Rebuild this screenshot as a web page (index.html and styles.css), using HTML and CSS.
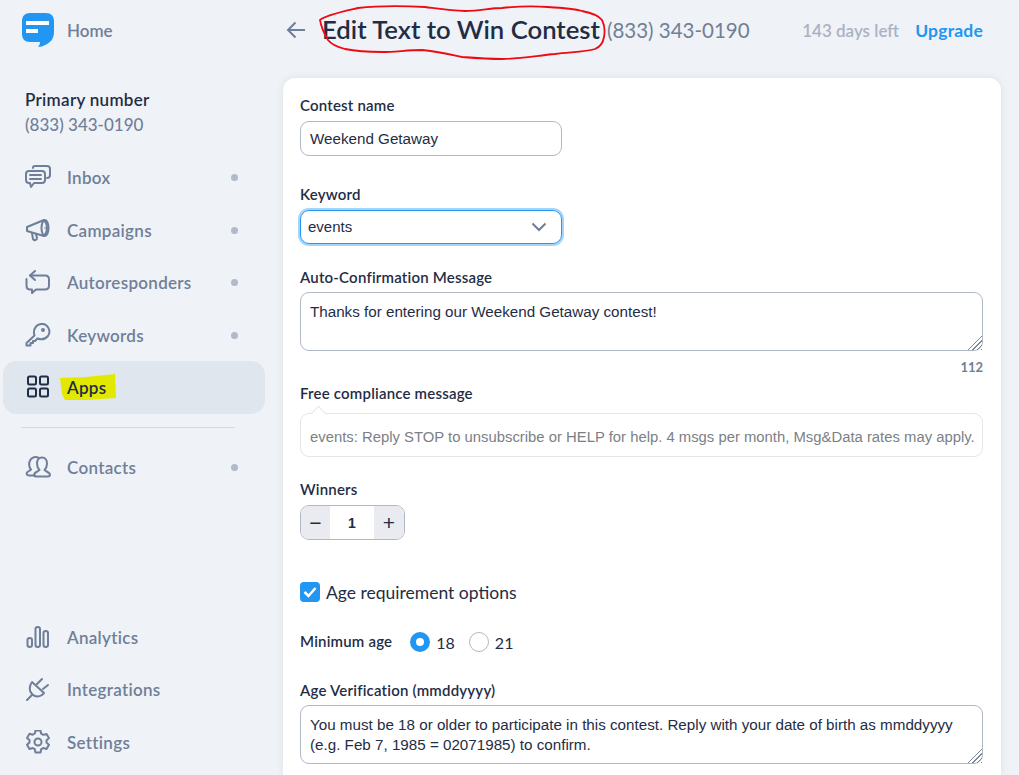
FILE: index.html
```html
<!DOCTYPE html>
<html lang="en">
<head>
  <meta charset="UTF-8">
  <meta name="viewport" content="width=device-width, initial-scale=1.0">
  <title>Edit Text to Win Contest</title>
  <link rel="stylesheet" href="styles.css">
</head>
<body>
  <aside class="sidebar">
    <a class="home-link">
      <svg class="logo" width="34" height="36" viewBox="0 0 34 36">
        <path d="M9 1h16c5 0 8 3 8 8v11c0 7-4 11-9 13-2 1-4 2-7 2 1-1 2-3 2-5H9c-5 0-8-3-8-8V9c0-5 3-8 8-8z" fill="#2196f3"/>
        <rect x="5" y="9" width="23" height="4" fill="#fff"/>
        <rect x="5" y="17" width="12" height="4" fill="#fff"/>
      </svg>
      <span>Home</span>
    </a>

    <div class="primary-number">
      <strong>Primary number</strong>
      <span>(833) 343-0190</span>
    </div>

    <nav class="nav-group">
      <a class="nav-item">
        <svg class="nav-icon" viewBox="0 0 26 24"><path d="M4 6h13c2 0 3 1 3 3v6c0 2-1 3-3 3H9l-3 4-1-4H4c-2 0-3-1-3-3V9c0-2 1-3 3-3z"/><path d="M8 3V2.500C8 1.500 9 1 10 1h12c2 0 3 1 3 3v6c0 2-1 3-3 3"/><path d="M5 10h11M5 14h11"/></svg>
        <span>Inbox</span><i class="dot"></i>
      </a>
      <a class="nav-item">
        <svg class="nav-icon" viewBox="0 0 26 24"><path d="M2 9l17-7c2 2 3 5 3 8s-1 6-3 8L2 13z"/><ellipse cx="20" cy="10" rx="3.500" ry="8"/><path d="M7 15l1 6c1 2 4 1 4-1l-1-4"/><circle cx="20" cy="10" r=".800" fill="#6f7f99" stroke="none"/></svg>
        <span>Campaigns</span><i class="dot"></i>
      </a>
      <a class="nav-item">
        <svg class="nav-icon" viewBox="0 0 26 24"><path d="M10 1L5 5.500l5 4.500"/><path d="M5 5.500h15c2.500 0 4 1.500 4 4v6c0 2.500-1.500 4-4 4H11l-4 3.500v-3.500H5c-2 0-3.500-1.500-3.500-4V9"/></svg>
        <span>Autoresponders</span><i class="dot"></i>
      </a>
      <a class="nav-item">
        <svg class="nav-icon" viewBox="0 0 26 24"><path d="M9.500 12.500L1.500 20v2.500h4V20H8v-2h2l2.500-2.500c4 1.500 8 .5 10.500-2.500 2.500-3.500 1.500-8-1.500-10.500S13.500.5 11 3.500c-2 2.500-2.500 6-1.500 9z"/><circle cx="18" cy="7" r="2" fill="#6f7f99" stroke="none"/></svg>
        <span>Keywords</span><i class="dot"></i>
      </a>
      <a class="nav-item active">
        <svg class="marker" width="58" height="27" viewBox="0 0 58 27"><path d="M1 4l26-1 29-3 1 24-29 2-22 0-3-6z" fill="#e3e800"/></svg>
        <svg class="nav-icon" viewBox="0 0 26 24"><rect x="3" y="1.500" width="8" height="8" rx="1.500"/><rect x="15" y="1.500" width="8" height="8" rx="1.500"/><rect x="3" y="13.500" width="8" height="8" rx="1.500"/><rect x="15" y="13.500" width="8" height="8" rx="1.500"/></svg>
        <span>Apps</span>
      </a>
      <hr class="nav-divider">
      <a class="nav-item">
        <svg class="nav-icon" viewBox="0 0 26 24"><path d="M10 20.500H4c-2 0-3-1.500-2-3 1-1.200 3-1.800 4-3-2-2-2.500-6-1-9 1.500-3.500 6-4.500 9-2.500"/><path d="M17 2.500c3.500 0 5 3 5 6 0 3-1 5-2.500 6.500 1 1.500 5 2 5.500 4.500 0 1.500-1 2-2 2H11c-1 0-2-.5-2-2 .5-2.500 4.500-3 5.500-4.500C13 13.500 12 11.500 12 8.500c0-3 1.500-6 5-6z"/></svg>
        <span>Contacts</span><i class="dot"></i>
      </a>
    </nav>

    <nav class="nav-group nav-bottom">
      <a class="nav-item">
        <svg class="nav-icon" viewBox="0 0 26 24"><rect x="2.500" y="13" width="4.500" height="9" rx="2.200"/><rect x="10.500" y="2" width="4.500" height="20" rx="2.200"/><rect x="18.500" y="6" width="4.500" height="16" rx="2.200"/></svg>
        <span>Analytics</span>
      </a>
      <a class="nav-item">
        <svg class="nav-icon" viewBox="0 0 26 24"><path d="M8 6l12 11-2 2c-3 2-7 2-10-1s-3-8 0-12z" transform="translate(-1 -1)"/><path d="M12 7l5-5M18 12l5-4M7 18l-5 5"/></svg>
        <span>Integrations</span>
      </a>
      <a class="nav-item">
        <svg class="nav-icon" viewBox="0 0 26 24"><path d="M10.500 1h5l.7 3.300 2.100 1.200 3.200-1 2.500 4.300-2.500 2.200v2.400l2.500 2.200-2.500 4.300-3.200-1-2.100 1.200-.7 3.300h-5l-.7-3.300-2.100-1.200-3.200 1-2.500-4.300L4.500 13.200v-2.400L2 8.600l2.500-4.300 3.200 1 2.100-1.200z" transform="translate(0 -.500) scale(1 .98)"/><circle cx="13" cy="12" r="3.500"/></svg>
        <span>Settings</span>
      </a>
    </nav>
  </aside>

  <main class="main">
    <header class="topbar">
      <svg class="back-arrow" width="20" height="18" viewBox="0 0 20 18"><path d="M19 9H2M9.500 1.500L2 9l7.500 7.500"/></svg>
      <h1>Edit Text to Win Contest</h1>
      <span class="top-phone">(833) 343-0190</span>
      <span class="days-left">143 days left</span>
      <a class="upgrade">Upgrade</a>
      <svg class="scribble" width="290" height="56" viewBox="318 4 290 56"><path d="M320 20C325 15 345 11 358 8C375 6 392 5 425 7C440 9 452 11 465 11C480 11 490 8 502 8C520 6 535 6 548 7C565 8 575 9 582 11C592 13 599 16 602 20C605 26 605 32 604 37C603 43 600 47 595 49C585 52 570 52 555 54C535 56 518 59 502 59C488 59 475 58 462 57C448 54 435 51 422 50C408 50 395 52 382 52C368 52 355 51 345 49C337 47 331 44 328 40C325 35 321 26 320 20Z"/></svg>
    </header>

    <form class="card">
      <label class="label">Contest name</label>
      <input class="input name-input" type="text" value="Weekend Getaway">

      <label class="label keyword-label">Keyword</label>
      <div class="select">
        <span>events</span>
        <svg width="16" height="10" viewBox="0 0 16 10"><path d="M1.500 1.500L8 8l6.500-6.500"/></svg>
      </div>

      <label class="label confirm-label">Auto-Confirmation Message</label>
      <textarea class="textarea confirm-text">Thanks for entering our Weekend Getaway contest!</textarea>
      <div class="counter">112</div>

      <label class="label compliance-label">Free compliance message</label>
      <div class="compliance">events: Reply STOP to unsubscribe or HELP for help. 4 msgs per month, Msg&amp;Data rates may apply.</div>

      <label class="label winners-label">Winners</label>
      <div class="stepper">
        <button type="button">&minus;</button>
        <span>1</span>
        <button type="button">+</button>
      </div>

      <div class="check-row">
        <span class="checkbox"><svg width="14" height="12" viewBox="0 0 14 12"><path d="M1.500 6l4 4 7-8"/></svg></span>
        <span>Age requirement options</span>
      </div>

      <div class="age-row">
        <span class="label">Minimum age</span>
        <span class="radio checked"></span><span class="radio-text">18</span>
        <span class="radio"></span><span class="radio-text">21</span>
      </div>

      <label class="label verify-label">Age Verification (mmddyyyy)</label>
      <textarea class="textarea verify-text">You must be 18 or older to participate in this contest. Reply with your date of birth as mmddyyyy (e.g. Feb 7, 1985 = 02071985) to confirm.</textarea>
    </form>
  </main>
</body>
</html>
```

FILE: styles.css
```css
* {
  box-sizing: border-box;
}
html, body {
  height: 100%;
}
body {
  margin: 0;
  height: 775px;
  overflow: hidden;
  display: flex;
  background-color: #eff2f6;
  color: #1f2d45;
  font-family: Lato, "Liberation Sans", sans-serif;
}

/* sidebar */
.sidebar {
  width: 283px;
  flex-shrink: 0;
  display: flex;
  flex-direction: column;
  padding: 12px 18px 0 3px;
}
.home-link {
  display: flex;
  align-items: center;
  gap: 12px;
  padding-left: 18px;
  height: 36px;
  font-size: 17px;
  font-weight: 600;
  color: #6f7f99;
}
.primary-number {
  display: flex;
  flex-direction: column;
  gap: 6px;
  margin-top: 42px;
  padding-left: 22px;
  font-size: 17px;
  line-height: 19px;
}
.primary-number strong {
  font-weight: 600;
  letter-spacing: 0.3px;
  color: #1f2d45;
}
.primary-number span {
  color: #6f7f99;
  font-weight: 500;
}
.nav-group {
  margin-top: 17px;
}
.nav-bottom {
  margin-top: auto;
  margin-bottom: 7px;
}
.nav-item {
  position: relative;
  display: flex;
  align-items: center;
  height: 52.500px;
  padding-left: 22px;
  font-size: 17px;
  font-weight: 600;
  letter-spacing: 0.3px;
  color: #6f7f99;
  border-radius: 14px;
}
.nav-item span {
  position: relative;
  margin-left: 16px;
  padding-top: 1px;
}
.nav-icon {
  width: 26px;
  height: 24px;
  fill: none;
  stroke: #6f7f99;
  stroke-width: 2;
  stroke-linejoin: round;
  stroke-linecap: round;
}
.dot {
  position: absolute;
  left: 228px;
  top: 23px;
  width: 7px;
  height: 7px;
  border-radius: 50%;
  background-color: #afbacb;
}
.nav-item.active {
  background-color: #e0e6ed;
  color: #1f2d45;
}
.nav-item.active .nav-icon {
  stroke: #1f2d45;
}
.marker {
  position: absolute;
  left: 56px;
  top: 13px;
}
.nav-divider {
  margin: 13px 30px 13px 18px;
  border: none;
  border-top: 1px solid #d5dae0;
}

/* main column */
.main {
  flex: 1;
  display: flex;
  flex-direction: column;
  padding-right: 18px;
}
.topbar {
  position: relative;
  display: flex;
  align-items: center;
  height: 78px;
  padding: 0 0 18px 3px;
}
.back-arrow {
  fill: none;
  stroke: #6f7f99;
  stroke-width: 2;
  margin-right: 16px;
}
.topbar h1 {
  margin: 0 0 2px;
  font-size: 25.700px;
  font-weight: 600;
  color: #1f2d45;
}
.top-phone {
  margin-left: 7px;
  font-size: 20.500px;
  color: #6f7f99;
}
.days-left {
  margin-left: auto;
  font-size: 17px;
  font-weight: 600;
  color: #a9b3c2;
}
.upgrade {
  margin: 0 18px 0 16px;
  font-size: 17.500px;
  font-weight: 700;
  letter-spacing: 0.2px;
  color: #2196f3;
}
.scribble {
  position: absolute;
  left: 35px;
  top: 4px;
  fill: none;
  stroke: #ee0a14;
  stroke-width: 1.800;
}

/* form card */
.card {
  flex: 1;
  display: flex;
  flex-direction: column;
  align-items: flex-start;
  padding: 20px 18px 0 17px;
  background-color: #fff;
  border-radius: 12px 12px 0 0;
  box-shadow: 0 0 8px rgba(31, 45, 69, 0.08);
}
.label {
  height: 16px;
  font-size: 15px;
  line-height: 15px;
  font-weight: 600;
  letter-spacing: 0.2px;
  color: #1f2d45;
}
.input, .textarea {
  font-family: "Liberation Sans", Arial, sans-serif;
  font-size: 15.200px;
  line-height: 20px;
  color: #1f2d45;
  background-color: #fff;
  border: 1px solid #b0b8c6;
  border-radius: 9px;
  outline: none;
}
.input {
  width: 262px;
  height: 35px;
  margin-top: 7px;
  padding: 0 9px;
}
.keyword-label {
  margin-top: 31px;
}
.select {
  display: flex;
  align-items: center;
  justify-content: space-between;
  width: 262px;
  height: 34px;
  margin-top: 7px;
  padding: 0 14px 1px 7px;
  font-family: "Liberation Sans", Arial, sans-serif;
  font-size: 15px;
  border: 1.500px solid #2196f3;
  border-radius: 9px;
  box-shadow: 0 0 0 2px #a6d5fa;
}
.select svg {
  fill: none;
  stroke: #6f7f99;
  stroke-width: 2;
}
.confirm-label {
  margin-top: 26px;
}
.textarea {
  width: 683px;
  padding: 9px 9px 0;
  resize: vertical;
}
.textarea::-webkit-resizer {
  background:
    linear-gradient(135deg, #fff 50%, transparent 50%),
    repeating-linear-gradient(135deg, transparent 0 2px, #7c8798 2px 3px);
}
.confirm-text {
  height: 59px;
  margin-top: 6px;
}
.counter {
  align-self: flex-end;
  margin-top: 8px;
  font-size: 13px;
  line-height: 16px;
  font-weight: 700;
  color: #6f7f99;
}
.compliance-label {
  margin-top: 11px;
}
.compliance {
  position: relative;
  width: 683px;
  height: 44px;
  margin-top: 11px;
  padding: 15px 0 0 9px;
  font-family: "Liberation Sans", Arial, sans-serif;
  font-size: 14.850px;
  line-height: 16px;
  white-space: nowrap;
  color: #7c7f85;
  border: 1px solid #e3e7ec;
  border-radius: 9px;
}
.compliance::before {
  content: "";
  position: absolute;
  left: 12px;
  top: -6px;
  width: 10px;
  height: 10px;
  background-color: #fff;
  border-left: 1px solid #e3e7ec;
  border-top: 1px solid #e3e7ec;
  transform: rotate(45deg);
}
.winners-label {
  margin-top: 25px;
}
.stepper {
  display: flex;
  align-items: stretch;
  width: 105px;
  height: 35px;
  margin-top: 7px;
  overflow: hidden;
  border: 1px solid #b0b8c6;
  border-radius: 9px;
}
.stepper button {
  width: 29px;
  padding: 0;
  border: none;
  background-color: #e9ebf0;
  font-family: "Liberation Sans", Arial, sans-serif;
  font-size: 21px;
  color: #1f2d45;
}
.stepper button:last-child {
  width: 30px;
}
.stepper span {
  flex: 1;
  align-self: center;
  text-align: center;
  font-family: "Liberation Sans", Arial, sans-serif;
  font-size: 14px;
  font-weight: 700;
}
.check-row {
  display: flex;
  align-items: center;
  gap: 6px;
  margin-top: 41px;
  font-size: 17.500px;
  line-height: 20px;
}
.check-row span:last-child {
  padding-top: 2px;
}
.checkbox {
  display: flex;
  align-items: center;
  justify-content: center;
  width: 20px;
  height: 20px;
  background-color: #2196f3;
  border-radius: 4px;
}
.checkbox svg {
  fill: none;
  stroke: #fff;
  stroke-width: 2.500;
}
.age-row {
  display: flex;
  align-items: center;
  margin-top: 29px;
  height: 20px;
}
.radio {
  width: 20px;
  height: 20px;
  margin-left: 14px;
  background-color: #fff;
  border: 1px solid #b0b8c6;
  border-radius: 50%;
}
.radio.checked {
  margin-left: 18px;
  border: 6px solid #2196f3;
}
.radio-text {
  margin-left: 6px;
  font-size: 16px;
}
.verify-label {
  margin-top: 31px;
}
.verify-text {
  height: 59px;
  margin-top: 6px;
}
```
